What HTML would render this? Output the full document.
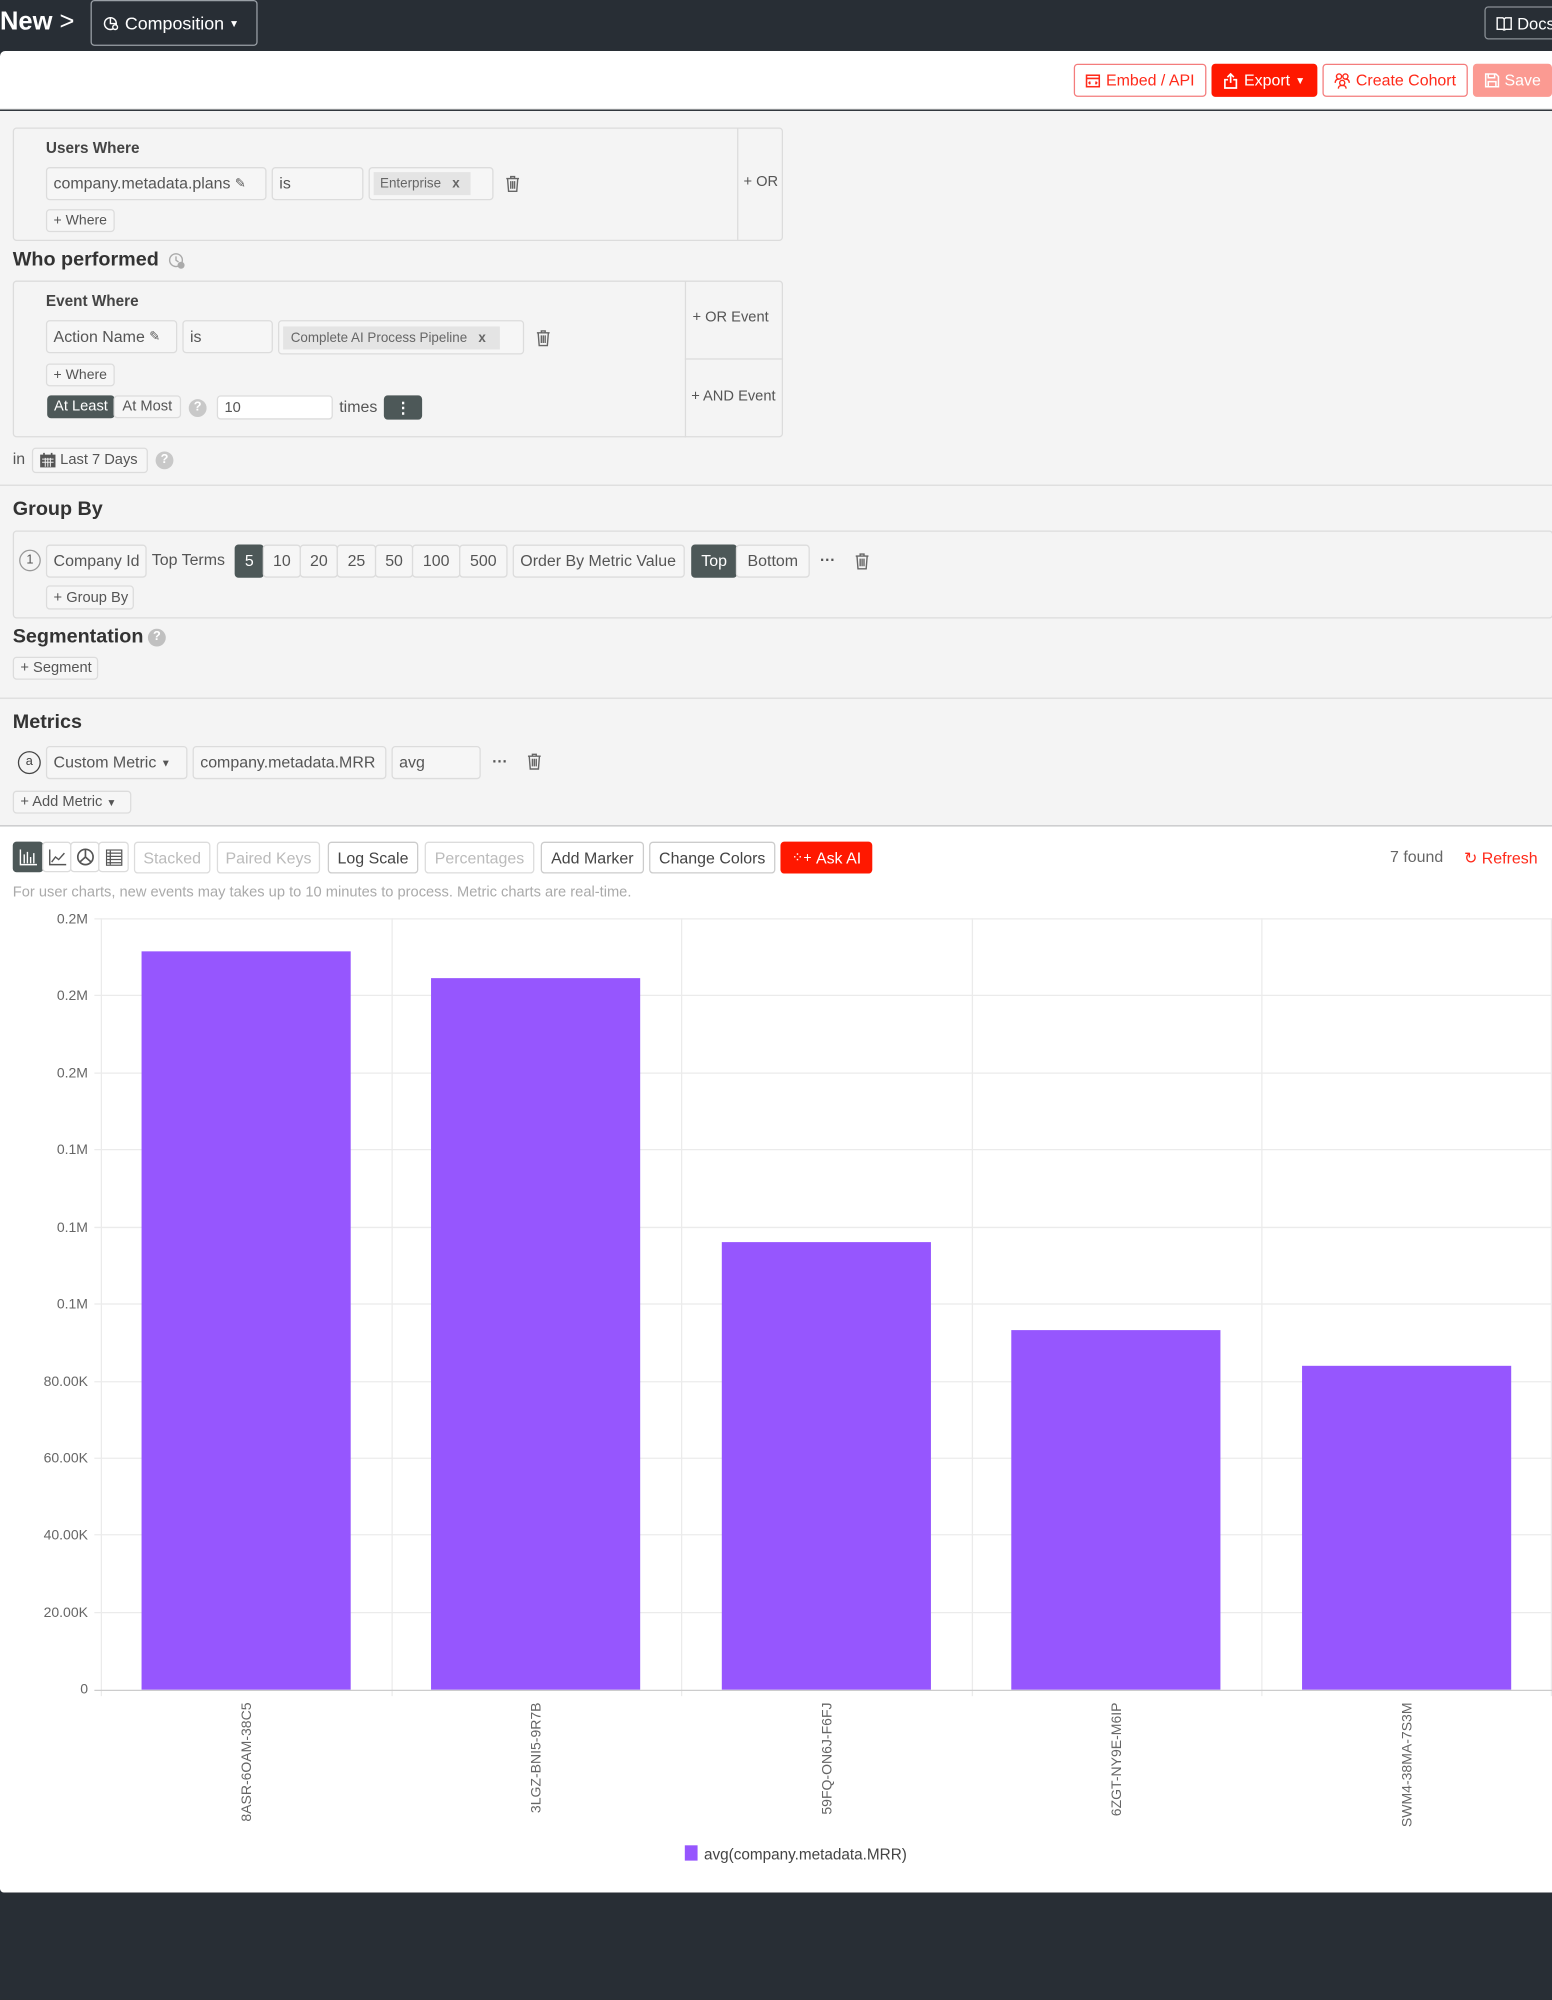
<!DOCTYPE html>
<html><head><meta charset="utf-8"><style>
*{box-sizing:border-box;margin:0;padding:0}
html,body{width:1552px;height:1999px;overflow:hidden;background:#282e35;font-family:"Liberation Sans",sans-serif}
#w{position:absolute;left:0;top:0;width:1217px;height:1568px;transform:scale(1.27527);transform-origin:0 0;background:#282e35}
.a{position:absolute}
.bx{position:absolute;border:1px solid #dcdcdc;border-radius:3px;background:#f6f6f6;font-size:12px;color:#555;display:flex;align-items:center;padding-left:5px;white-space:nowrap}
.wb{background:#fff}
.t{position:absolute;font-size:12px;color:#555;white-space:nowrap}
.h{position:absolute;font-size:15.5px;font-weight:bold;color:#333}
.dk{background:#4d5858!important;color:#fff!important;border-color:#4d5858!important}
.rb{position:absolute;border:1px solid #f47c7c;border-radius:3px;color:#ff2a1a;font-size:12.5px;display:flex;align-items:center;justify-content:center;background:#fff;gap:4px}
.c{justify-content:center;padding-left:0}
.tr{position:absolute}
</style></head><body><div id="w">
<svg width="0" height="0" style="position:absolute"><defs>
<symbol id="trash" viewBox="0 0 12 14"><path d="M1 3h10M4.5 3V1.5h3V3M2 3l.8 10h6.4L10 3M4.5 5v6M6 5v6M7.5 5v6" fill="none" stroke="#666" stroke-width="1.1"/></symbol>
</defs></svg>
<!-- top bar -->
<div class="a" style="left:0;top:6px;color:#fff;font-size:20px;font-weight:bold">New <span style="font-weight:normal">&gt;</span></div>
<div class="a" style="left:71px;top:0;width:131px;height:36px;border:1px solid #9aa0a6;border-radius:3px;color:#fff;font-size:14px;display:flex;align-items:center;padding-left:9px">
<svg width="13" height="13" viewBox="0 0 14 14" fill="none" stroke="#fff" stroke-width="1.2"><circle cx="6" cy="7" r="5"/><path d="M6 2v5h5"/><circle cx="10" cy="10" r="2" fill="#282e35"/></svg>&nbsp;Composition&nbsp;<span style="font-size:8px">▼</span></div>
<div class="a" style="left:1164px;top:5px;width:60px;height:26px;border:1px solid #8a9096;border-radius:3px;color:#fff;font-size:13px;display:flex;align-items:center;padding-left:8px"><svg width="13" height="11" viewBox="0 0 13 11" fill="none" stroke="#fff" stroke-width="1.1"><path d="M1 1h4.5l1 1 1-1H12v9H7.5l-1 1-1-1H1z M6.5 2v8"/></svg>&nbsp;Docs</div>
<!-- white header -->
<div class="a" style="left:0;top:40px;width:1217px;height:46px;background:#fff;border-bottom:1px solid #e2e2e2;border-top-left-radius:4px"></div>
<div class="rb" style="left:842px;top:50px;width:104px;height:26px"><svg width="12" height="11" viewBox="0 0 12 11" fill="none" stroke="#ff2a1a" stroke-width="1.2"><rect x="1" y="1" width="10" height="9"/><path d="M1 3.5h10M4 6l-1 1 1 1M8 6l1 1-1 1"/></svg>Embed / API</div>
<div class="rb" style="left:950px;top:50px;width:83px;height:26px;background:#ff1800;color:#fff;border-color:#ff1800"><svg width="12" height="13" viewBox="0 0 12 13" fill="none" stroke="#fff" stroke-width="1.3"><path d="M6 8V1M3.5 3.5L6 1l2.5 2.5M4 5.5H1.5V12h9V5.5H8"/></svg>Export <span style="font-size:8px">▼</span></div>
<div class="rb" style="left:1037px;top:50px;width:114px;height:26px"><svg width="13" height="13" viewBox="0 0 13 13" fill="none" stroke="#ff2a1a" stroke-width="1.1"><circle cx="4" cy="3" r="2"/><circle cx="9" cy="3" r="2"/><circle cx="6.5" cy="8" r="2"/><path d="M1 8c0-2 1-3 3-3M12 8c0-2-1-3-3-3M3.5 12.5c0-2 1-2.5 3-2.5s3 .5 3 2.5"/></svg>Create Cohort</div>
<div class="rb" style="left:1155px;top:50px;width:62px;height:26px;background:#fb9a92;color:#fff;border-color:#fb9a92"><svg width="12" height="12" viewBox="0 0 12 12" fill="none" stroke="#fff" stroke-width="1.2"><path d="M1 1h8l2 2v8H1z M3 1v3h5V1 M3 11V7h6v4"/></svg>Save</div>
<!-- gray section -->
<div class="a" style="left:0;top:87px;width:1217px;height:560px;background:#f4f4f4"></div>
<div class="a" style="left:0;top:380px;width:1217px;height:1px;background:#dcdcdc"></div>
<div class="a" style="left:0;top:547px;width:1217px;height:1px;background:#dcdcdc"></div>
<div class="a" style="left:0;top:647px;width:1217px;height:1px;background:#dcdcdc"></div>
<!-- users where -->
<div class="a" style="left:10px;top:100px;width:604px;height:89px;border:1px solid #dcdcdc;border-radius:3px"></div>
<div class="a" style="left:578px;top:100px;width:1px;height:89px;background:#dcdcdc"></div>
<div class="t" style="left:36px;top:109px;font-weight:bold;color:#444">Users Where</div>
<div class="bx" style="left:36px;top:131px;width:173px;height:26px;font-size:12.5px">company.metadata.plans&nbsp;<span style="font-size:10px">&#9998;</span></div>
<div class="bx" style="left:213px;top:131px;width:72px;height:26px;font-size:12.5px">is</div>
<div class="bx" style="left:289px;top:131px;width:98px;height:26px;padding-left:3px"><span style="background:#e4e4e4;padding:3px 5px;font-size:10.5px;color:#666;width:76px;display:inline-block">Enterprise &nbsp;&nbsp;<b>x</b></span></div>
<svg class="tr" style="left:396px;top:137px" width="12" height="14"><use href="#trash"/></svg>
<div class="bx" style="left:36px;top:164px;width:54px;height:18px;font-size:11px">+ Where</div>
<div class="t" style="left:583px;top:137px;font-size:11.5px">+ OR</div>
<!-- who performed -->
<div class="h" style="left:10px;top:195px">Who performed</div>
<svg class="tr" style="left:132px;top:198px" width="13" height="13" viewBox="0 0 13 13" fill="none" stroke="#aaa" stroke-width="1.1"><circle cx="6" cy="6" r="5"/><path d="M6 3v3l2 1.5"/><circle cx="10" cy="10" r="2.2" fill="#aaa"/></svg>
<div class="a" style="left:10px;top:220px;width:604px;height:123px;border:1px solid #dcdcdc;border-radius:3px"></div>
<div class="a" style="left:537px;top:220px;width:1px;height:123px;background:#dcdcdc"></div>
<div class="a" style="left:537px;top:281px;width:77px;height:1px;background:#dcdcdc"></div>
<div class="t" style="left:36px;top:229px;font-weight:bold;color:#444">Event Where</div>
<div class="bx" style="left:36px;top:251px;width:103px;height:26px;font-size:12.5px">Action Name&nbsp;<span style="font-size:10px">&#9998;</span></div>
<div class="bx" style="left:143px;top:251px;width:71px;height:26px;font-size:12.5px">is</div>
<div class="bx" style="left:218px;top:251px;width:193px;height:27px;padding-left:3px"><span style="background:#e4e4e4;padding:3px 6px;font-size:10.5px;color:#666;width:170px;display:inline-block">Complete AI Process Pipeline &nbsp;&nbsp;<b>x</b></span></div>
<svg class="tr" style="left:420px;top:258px" width="12" height="14"><use href="#trash"/></svg>
<div class="bx" style="left:36px;top:285px;width:54px;height:18px;font-size:11px">+ Where</div>
<div class="bx dk c" style="left:37px;top:310px;width:53px;height:18px;font-size:11.5px">At Least</div>
<div class="bx c" style="left:89px;top:310px;width:53px;height:18px;font-size:11.5px">At Most</div>
<div class="a" style="left:148px;top:313px;width:14px;height:14px;border-radius:50%;background:#c8c8c8;color:#fff;font-size:10px;font-weight:bold;text-align:center;line-height:14px">?</div>
<div class="bx wb" style="left:170px;top:310px;width:91px;height:19px;font-size:11.5px">10</div>
<div class="t" style="left:266px;top:312px;font-size:12.5px">times</div>
<div class="bx dk c" style="left:301px;top:310px;width:30px;height:19px;font-weight:bold">&#8942;</div>
<div class="t" style="left:543px;top:243px;font-size:11.5px">+ OR Event</div>
<div class="t" style="left:542px;top:305px;font-size:11.5px">+ AND Event</div>
<div class="t" style="left:10px;top:353px;font-size:12.5px">in</div>
<div class="bx" style="left:25px;top:351px;width:91px;height:20px;font-size:11.5px"><svg width="13" height="12" viewBox="0 0 13 12"><rect x="0.5" y="1.5" width="12" height="10" fill="#555"/><path d="M2 5h9M2 7.5h9M4.5 4v7M6.5 4v7M8.5 4v7" stroke="#eee" stroke-width=".8"/><path d="M3.5 0v3M9.5 0v3" stroke="#555" stroke-width="1.3"/></svg>&nbsp;Last 7 Days</div>
<div class="a" style="left:122px;top:354px;width:14px;height:14px;border-radius:50%;background:#c8c8c8;color:#fff;font-size:10px;font-weight:bold;text-align:center;line-height:14px">?</div>
<!-- group by -->
<div class="h" style="left:10px;top:391px">Group By</div>
<div class="a" style="left:10px;top:416px;width:1208px;height:69px;border:1px solid #dcdcdc;border-radius:3px"></div>
<div class="a" style="left:15px;top:431px;width:17px;height:17px;border:1px solid #999;border-radius:50%;font-size:10px;color:#555;text-align:center;line-height:15px">1</div>
<div class="bx" style="left:36px;top:427px;width:79px;height:26px;font-size:12.5px">Company Id</div>
<div class="t" style="left:119px;top:432px;font-size:12.5px">Top Terms</div>
<div class="bx dk c" style="left:184px;top:427px;width:23px;height:26px;font-size:12.5px">5</div>
<div class="bx c" style="left:206px;top:427px;width:30px;height:26px;font-size:12.5px">10</div>
<div class="bx c" style="left:235px;top:427px;width:30px;height:26px;font-size:12.5px">20</div>
<div class="bx c" style="left:264px;top:427px;width:31px;height:26px;font-size:12.5px">25</div>
<div class="bx c" style="left:294px;top:427px;width:30px;height:26px;font-size:12.5px">50</div>
<div class="bx c" style="left:323px;top:427px;width:38px;height:26px;font-size:12.5px">100</div>
<div class="bx c" style="left:360px;top:427px;width:38px;height:26px;font-size:12.5px">500</div>
<div class="bx" style="left:402px;top:427px;width:135px;height:26px;font-size:12.5px">Order By Metric Value</div>
<div class="bx dk c" style="left:542px;top:427px;width:36px;height:26px;font-size:12.5px">Top</div>
<div class="bx c" style="left:577px;top:427px;width:58px;height:26px;font-size:12.5px">Bottom</div>
<div class="t" style="left:643px;top:432px;font-size:12px;font-weight:bold">···</div>
<svg class="tr" style="left:670px;top:433px" width="12" height="14"><use href="#trash"/></svg>
<div class="bx" style="left:36px;top:459px;width:69px;height:19px;font-size:11.5px">+ Group By</div>
<!-- segmentation -->
<div class="h" style="left:10px;top:491px">Segmentation</div>
<div class="a" style="left:116px;top:493px;width:14px;height:14px;border-radius:50%;background:#c0c0c0;color:#fff;font-size:10px;font-weight:bold;text-align:center;line-height:14px">?</div>
<div class="bx" style="left:10px;top:515px;width:67px;height:18px;font-size:11.5px">+ Segment</div>
<!-- metrics -->
<div class="h" style="left:10px;top:558px">Metrics</div>
<div class="a" style="left:14px;top:589px;width:18px;height:18px;border:1.3px solid #444;border-radius:50%;font-size:10px;color:#444;text-align:center;line-height:15px">a</div>
<div class="bx" style="left:36px;top:585px;width:111px;height:26px;font-size:12.5px">Custom Metric&nbsp;<span style="font-size:8px">▼</span></div>
<div class="bx" style="left:151px;top:585px;width:152px;height:26px;font-size:12.5px">company.metadata.MRR</div>
<div class="bx" style="left:307px;top:585px;width:70px;height:26px;font-size:12.5px">avg</div>
<div class="t" style="left:386px;top:590px;font-size:12px;font-weight:bold">···</div>
<svg class="tr" style="left:413px;top:590px" width="12" height="14"><use href="#trash"/></svg>
<div class="bx" style="left:10px;top:620px;width:93px;height:18px;font-size:11.5px">+ Add Metric&nbsp;<span style="font-size:8px">▼</span></div>
<!-- chart section -->
<div class="a" style="left:0;top:648px;width:1217px;height:836px;background:#fff;border-bottom-left-radius:3px"></div>
<div class="bx dk c" style="left:10px;top:660px;width:24px;height:24px"><svg width="14" height="13" viewBox="0 0 14 13" fill="none" stroke="#fff" stroke-width="1.1"><path d="M1 0v12h13M4 11V4M6.5 11V2M9 11V6M11.5 11V3"/></svg></div>
<div class="bx wb c" style="left:33px;top:660px;width:23px;height:24px"><svg width="14" height="13" viewBox="0 0 14 13" fill="none" stroke="#555" stroke-width="1.1"><path d="M1 0v12h13M2.5 10l3-4 2.5 2 4.5-5"/></svg></div>
<div class="bx wb c" style="left:55px;top:660px;width:23px;height:24px"><svg width="14" height="14" viewBox="0 0 14 14" fill="none" stroke="#555" stroke-width="1.3"><circle cx="7" cy="7" r="6"/><path d="M7 1v6l4.5 4M7 7l-4.5 4"/></svg></div>
<div class="bx wb c" style="left:77px;top:660px;width:24px;height:24px"><svg width="13" height="13" viewBox="0 0 13 13"><rect x="0.5" y="0.5" width="12" height="12" fill="none" stroke="#555"/><path d="M1 3h11M1 5.5h11M1 8h11M1 10.5h11M3.5 1v11" stroke="#555" stroke-width="1"/></svg></div>
<div class="bx wb c" style="left:105px;top:660px;width:60px;height:25px;font-size:12.5px;color:#bbb">Stacked</div>
<div class="bx wb c" style="left:170px;top:660px;width:81px;height:25px;font-size:12.5px;color:#bbb">Paired Keys</div>
<div class="bx wb c" style="left:257px;top:660px;width:71px;height:25px;font-size:12.5px;color:#444;border-color:#ccc">Log Scale</div>
<div class="bx wb c" style="left:333px;top:660px;width:86px;height:25px;font-size:12.5px;color:#bbb">Percentages</div>
<div class="bx wb c" style="left:424px;top:660px;width:81px;height:25px;font-size:12.5px;color:#444;border-color:#ccc">Add Marker</div>
<div class="bx wb c" style="left:509px;top:660px;width:99px;height:25px;font-size:12.5px;color:#444;border-color:#ccc">Change Colors</div>
<div class="bx c" style="left:612px;top:660px;width:72px;height:25px;font-size:12.5px;color:#fff;background:#ff1800;border-color:#ff1800"><span style="font-size:11px">&#8280;+</span>&nbsp;Ask AI</div>
<div class="t" style="left:1090px;top:665px;font-size:12.5px;color:#666">7 found</div>
<div class="t" style="left:1148px;top:665px;font-size:12.5px;color:#ff2a1a">&#8635; Refresh</div>
<div class="t" style="left:10px;top:694px;font-size:11.5px;color:#aaa">For user charts, new events may takes up to 10 minutes to process. Metric charts are real-time.</div>
<svg class="a" style="left:0;top:700px" width="1217" height="780" viewBox="0 700 1217 780">
<g stroke="#ebebeb" stroke-width="1">
<line x1="74" y1="720.5" x2="1217" y2="720.5"/><line x1="74" y1="780.5" x2="1217" y2="780.5"/><line x1="74" y1="841.5" x2="1217" y2="841.5"/><line x1="74" y1="901.5" x2="1217" y2="901.5"/><line x1="74" y1="962.5" x2="1217" y2="962.5"/><line x1="74" y1="1022.5" x2="1217" y2="1022.5"/><line x1="74" y1="1083.5" x2="1217" y2="1083.5"/><line x1="74" y1="1143.5" x2="1217" y2="1143.5"/><line x1="74" y1="1203.5" x2="1217" y2="1203.5"/><line x1="74" y1="1264.5" x2="1217" y2="1264.5"/>
<line x1="79.5" y1="720" x2="79.5" y2="1330"/><line x1="307.5" y1="720" x2="307.5" y2="1330"/><line x1="534.5" y1="720" x2="534.5" y2="1330"/><line x1="762.5" y1="720" x2="762.5" y2="1330"/><line x1="989.5" y1="720" x2="989.5" y2="1330"/><line x1="1216.5" y1="720" x2="1216.5" y2="1330"/>
</g>
<g fill="#9656fe">
<rect x="111" y="746" width="164" height="579"/><rect x="338" y="767" width="164" height="558"/><rect x="566" y="974" width="164" height="351"/><rect x="793" y="1043" width="164" height="282"/><rect x="1021" y="1071" width="164" height="254"/>
</g>
<line x1="74" y1="1325.5" x2="1217" y2="1325.5" stroke="#ccc"/>
<g font-family="Liberation Sans" font-size="11" fill="#666" text-anchor="end">
<text x="69" y="724">0.2M</text><text x="69" y="784">0.2M</text><text x="69" y="845">0.2M</text><text x="69" y="905">0.1M</text><text x="69" y="966">0.1M</text><text x="69" y="1026">0.1M</text><text x="69" y="1087">80.00K</text><text x="69" y="1147">60.00K</text><text x="69" y="1207">40.00K</text><text x="69" y="1268">20.00K</text><text x="69" y="1328">0</text>
<text transform="translate(197,1335) rotate(-90)">8ASR-6OAM-38C5</text>
<text transform="translate(424,1335) rotate(-90)">3LGZ-BNI5-9R7B</text>
<text transform="translate(652,1335) rotate(-90)">59FQ-ON6J-F6FJ</text>
<text transform="translate(879,1335) rotate(-90)">6ZGT-NY9E-M6IP</text>
<text transform="translate(1107,1335) rotate(-90)">SWM4-38MA-7S3M</text>
</g>
<rect x="537" y="1447" width="10" height="12" fill="#9656fe"/>
<text x="552" y="1458" font-family="Liberation Sans" font-size="12" fill="#444">avg(company.metadata.MRR)</text>
</svg>
</div></body></html>
